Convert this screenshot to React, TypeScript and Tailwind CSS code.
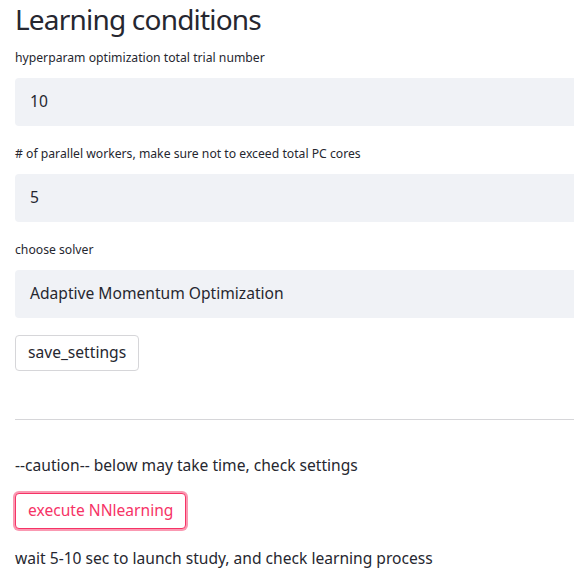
import React from "react";

const font = { fontFamily: '"Noto Sans", "Open Sans", sans-serif' };

function Field({ label, value }: { label: string; value: string }) {
  return (
    <div className="flex flex-col">
      <div className="h-[20px] text-[12.2px] leading-[20px] text-[#262730]">{label}</div>
      <div className="mt-[10px] h-[48px] rounded-[4px] bg-[#f0f2f6] flex items-center pl-[15px] text-[15.6px] text-[#262730]">
        {value}
      </div>
    </div>
  );
}

export default function App() {
  return (
    <div className="w-[574px] h-[586px] overflow-hidden bg-white" style={font}>
      <div className="w-[620px] pl-[15px] flex flex-col">
        <h1 className="text-[28px] tracking-[-0.8px] leading-[38px] text-[#262730] font-normal">Learning conditions</h1>
        <div className="mt-[10px] flex flex-col gap-[18px]">
          <Field label="hyperparam optimization total trial number" value="10" />
          <Field label="# of parallel workers, make sure not to exceed total PC cores" value="5" />
          <Field label="choose solver" value="Adaptive Momentum Optimization" />
        </div>
        <div className="mt-[17px]">
          <button className="h-[36px] px-[12px] rounded-[4px] border border-[#d6d6d9] bg-white text-[15.6px] text-[#262730]">
            save_settings
          </button>
        </div>
        <div className="mt-[48px] h-px bg-[#d6d6d9]" />
        <div className="mt-[33px] text-[15.6px] leading-[24px] text-[#262730]">--caution-- below may take time, check settings</div>
        <div className="mt-[16px]">
          <button className="h-[36px] px-[12px] rounded-[4px] border border-[#f63366] ring-2 ring-[#f6336680] bg-white text-[15.6px] text-[#f63366]">
            execute NNlearning
          </button>
        </div>
        <div className="mt-[17px] text-[15.6px] leading-[24px] text-[#262730]">wait 5-10 sec to launch study, and check learning process</div>
      </div>
    </div>
  );
}
